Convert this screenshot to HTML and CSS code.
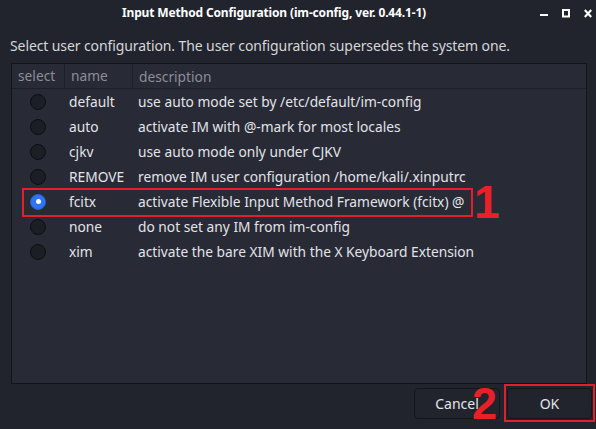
FILE: index.html
```html
<!DOCTYPE html>
<html>
<head>
<meta charset="utf-8">
<link rel="stylesheet" href="styles.css">
</head>
<body>
<div class="window">
  <div class="titlebar">
    <div class="title">Input Method Configuration (im-config, ver. 0.44.1-1)</div>
    <div class="controls">
      <svg width="8" height="9" viewBox="0 0 8 9"><rect x="0" y="5" width="8" height="2" fill="#fff"/></svg>
      <svg width="8" height="9" viewBox="0 0 8 9"><rect x="1" y="1" width="6" height="6.5" fill="none" stroke="#fff" stroke-width="2"/></svg>
      <svg width="8" height="9" viewBox="0 0 8 9"><path d="M0.8 1 L7.2 8 M7.2 1 L0.8 8" stroke="#fff" stroke-width="2"/></svg>
    </div>
  </div>
  <div class="intro">Select user configuration. The user configuration supersedes the system one.</div>
  <div class="list">
    <div class="row head">
      <div class="c1">select</div><div class="c2">name</div><div class="c3">description</div>
    </div>
    <div class="row"><div class="c1"><span class="radio"></span></div><div class="c2">default</div><div class="c3">use auto mode set by /etc/default/im-config</div></div>
    <div class="row"><div class="c1"><span class="radio"></span></div><div class="c2">auto</div><div class="c3">activate IM with @-mark for most locales</div></div>
    <div class="row"><div class="c1"><span class="radio"></span></div><div class="c2">cjkv</div><div class="c3">use auto mode only under CJKV</div></div>
    <div class="row"><div class="c1"><span class="radio"></span></div><div class="c2">REMOVE</div><div class="c3">remove IM user configuration /home/kali/.xinputrc</div></div>
    <div class="row marked"><div class="c1"><span class="radio on"></span></div><div class="c2">fcitx</div><div class="c3">activate Flexible Input Method Framework (fcitx) @</div>
      <span class="mark-box mark-row"></span><span class="num num1">1</span></div>
    <div class="row"><div class="c1"><span class="radio"></span></div><div class="c2">none</div><div class="c3">do not set any IM from im-config</div></div>
    <div class="row"><div class="c1"><span class="radio"></span></div><div class="c2">xim</div><div class="c3">activate the bare XIM with the X Keyboard Extension</div></div>
  </div>
  <div class="footer">
    <button class="btn cancel">Cancel</button>
    <div class="ok-wrap">
      <button class="btn ok">OK</button>
      <span class="mark-box mark-ok"></span>
      <span class="num num2">2</span>
    </div>
  </div>
</div>
</body>
</html>
```

FILE: styles.css
```css
html, body {
  margin: 0;
  padding: 0;
  background: #22242d;
}
.window {
  width: 596px;
  height: 429px;
  display: flex;
  flex-direction: column;
  background: #22242d;
  font-family: "Noto Sans", "DejaVu Sans", sans-serif;
  color: #e2e4e8;
  overflow: hidden;
}
.titlebar {
  height: 25px;
  display: flex;
  align-items: center;
  padding-left: 122px;
  position: relative;
}
.title {
  font-size: 12px;
  font-weight: bold;
  color: #ffffff;
  letter-spacing: -0.15px;
}
.controls {
  position: absolute;
  right: 4px;
  top: 9px;
  display: flex;
  gap: 14px;
}
.controls svg {
  display: block;
}
.intro {
  font-size: 14px;
  color: #d4d6da;
  padding: 11px 0 0 10px;
  height: 27px;
  letter-spacing: -0.1px;
}
.list {
  margin: 0 9px 0 11px;
  height: 319px;
  background: #282a36;
  border: 1px solid #12141a;
  display: flex;
  flex-direction: column;
}
.row {
  display: flex;
  align-items: center;
  height: 25px;
  font-size: 13.75px;
  position: relative;
}
.row.head {
  height: 24px;
  border-bottom: 1px solid #1e2029;
  color: #8b8e96;
}
.row.head .c1, .row.head .c2 {
  border-right: 1px solid #1e2029;
  height: 24px;
  line-height: 24px;
}
.c1 {
  width: 52px;
  padding-left: 6px;
  box-sizing: border-box;
  flex: none;
}
.row.head .c1 { width: 53px; }
.c2 {
  width: 68px;
  padding-left: 5px;
  box-sizing: border-box;
  flex: none;
}
.row.head .c2 { padding-left: 6px; }
.c3 {
  padding-left: 6px;
  white-space: nowrap;
}
.radio {
  display: block;
  width: 16px;
  height: 16px;
  border-radius: 50%;
  background: #1c1e25;
  border: 1px solid #0d0e12;
  box-sizing: border-box;
  margin-left: 12px;
}
.radio.on {
  background: #2f74f0;
  border-color: #2a5ed0;
  position: relative;
}
.radio.on::after {
  content: "";
  position: absolute;
  left: 4.5px;
  top: 4.5px;
  width: 5px;
  height: 5px;
  border-radius: 50%;
  background: #ffffff;
}
.mark-box {
  position: absolute;
  border: 2px solid #e0202a;
  box-sizing: border-box;
}
.mark-row {
  left: 10px;
  top: -1px;
  width: 451px;
  height: 29px;
}
.num {
  position: absolute;
  color: #e8202a;
  font-family: "Liberation Sans", Arial, sans-serif;
  font-weight: bold;
  line-height: 1;
}
.num1 {
  left: 462px;
  top: -10px;
  font-size: 46px;
}
.footer {
  flex: 1;
  display: flex;
  justify-content: flex-end;
  align-items: flex-start;
  padding: 4px 4px 0 0;
  gap: 7px;
}
.btn {
  font-family: "Noto Sans", "DejaVu Sans", sans-serif;
  font-size: 14px;
  color: #e2e4e8;
  background: #22242d;
  border: 1px solid #14161c;
  border-radius: 4px;
  height: 31px;
  box-sizing: border-box;
  padding: 0;
}
.btn.cancel {
  width: 86px;
}
.ok-wrap {
  position: relative;
}
.btn.ok {
  width: 85px;
  display: block;
}
.mark-ok {
  left: -3px;
  top: -4px;
  width: 91px;
  height: 38px;
}
.num2 {
  left: -35px;
  top: -7px;
  font-size: 45px;
}
```
